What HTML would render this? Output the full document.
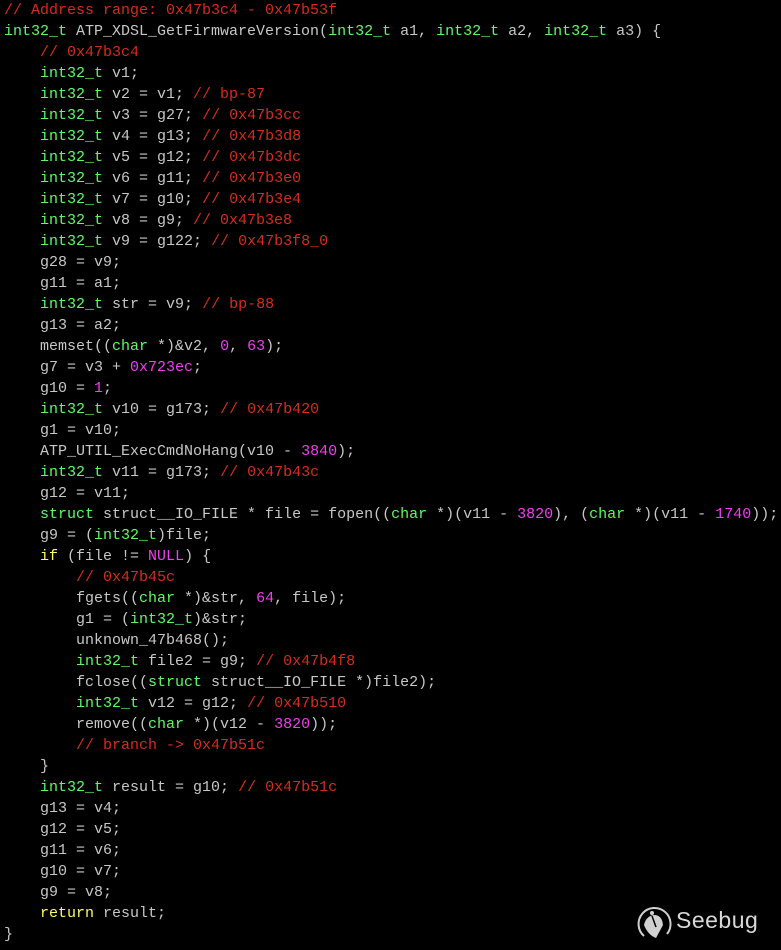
<!DOCTYPE html>
<html><head><meta charset="utf-8"><style>
html,body{margin:0;padding:0;background:#000;width:781px;height:950px;overflow:hidden}
pre{margin:0;padding:0 0 0 4px;font-family:"Liberation Mono",monospace;font-size:15px;line-height:21px;color:#c7c7c7;white-space:pre}
.c{color:#d52c1c}.t{color:#5ff967}.n{color:#f03ef0}.k{color:#fefb67}
.logo{position:absolute;left:634px;top:903px;width:140px;height:40px}
.logo span{position:absolute;left:42px;top:4px;font-family:"Liberation Sans",sans-serif;font-size:23px;color:#d8d8d8;letter-spacing:0.5px}
</style></head><body>
<pre><span class="c">// Address range: 0x47b3c4 - 0x47b53f</span>
<span class="t">int32_t</span> ATP_XDSL_GetFirmwareVersion(<span class="t">int32_t</span> a1, <span class="t">int32_t</span> a2, <span class="t">int32_t</span> a3) {
    <span class="c">// 0x47b3c4</span>
    <span class="t">int32_t</span> v1;
    <span class="t">int32_t</span> v2 = v1; <span class="c">// bp-87</span>
    <span class="t">int32_t</span> v3 = g27; <span class="c">// 0x47b3cc</span>
    <span class="t">int32_t</span> v4 = g13; <span class="c">// 0x47b3d8</span>
    <span class="t">int32_t</span> v5 = g12; <span class="c">// 0x47b3dc</span>
    <span class="t">int32_t</span> v6 = g11; <span class="c">// 0x47b3e0</span>
    <span class="t">int32_t</span> v7 = g10; <span class="c">// 0x47b3e4</span>
    <span class="t">int32_t</span> v8 = g9; <span class="c">// 0x47b3e8</span>
    <span class="t">int32_t</span> v9 = g122; <span class="c">// 0x47b3f8_0</span>
    g28 = v9;
    g11 = a1;
    <span class="t">int32_t</span> str = v9; <span class="c">// bp-88</span>
    g13 = a2;
    memset((<span class="t">char</span> *)&amp;v2, <span class="n">0</span>, <span class="n">63</span>);
    g7 = v3 + <span class="n">0x723ec</span>;
    g10 = <span class="n">1</span>;
    <span class="t">int32_t</span> v10 = g173; <span class="c">// 0x47b420</span>
    g1 = v10;
    ATP_UTIL_ExecCmdNoHang(v10 - <span class="n">3840</span>);
    <span class="t">int32_t</span> v11 = g173; <span class="c">// 0x47b43c</span>
    g12 = v11;
    <span class="t">struct</span> struct__IO_FILE * file = fopen((<span class="t">char</span> *)(v11 - <span class="n">3820</span>), (<span class="t">char</span> *)(v11 - <span class="n">1740</span>));
    g9 = (<span class="t">int32_t</span>)file;
    <span class="k">if</span> (file != <span class="n">NULL</span>) {
        <span class="c">// 0x47b45c</span>
        fgets((<span class="t">char</span> *)&amp;str, <span class="n">64</span>, file);
        g1 = (<span class="t">int32_t</span>)&amp;str;
        unknown_47b468();
        <span class="t">int32_t</span> file2 = g9; <span class="c">// 0x47b4f8</span>
        fclose((<span class="t">struct</span> struct__IO_FILE *)file2);
        <span class="t">int32_t</span> v12 = g12; <span class="c">// 0x47b510</span>
        remove((<span class="t">char</span> *)(v12 - <span class="n">3820</span>));
        <span class="c">// branch -&gt; 0x47b51c</span>
    }
    <span class="t">int32_t</span> result = g10; <span class="c">// 0x47b51c</span>
    g13 = v4;
    g12 = v5;
    g11 = v6;
    g10 = v7;
    g9 = v8;
    <span class="k">return</span> result;
}</pre>
<div class="logo">
<svg width="40" height="40" viewBox="0 0 40 40" style="position:absolute;left:0;top:0">
<path d="M10 33 A16 16 0 1 1 33 31" fill="none" stroke="#d0d0d0" stroke-width="2"/>
<path d="M10 22 Q12 13 20 12 Q28 12 29 22 L22 35 Q14 32 10 22 Z" fill="#d0d0d0"/>
<path d="M18 13 L22 24" stroke="#000" stroke-width="1.5"/>
<circle cx="18" cy="10" r="2" fill="#d0d0d0"/>
</svg>
<span>Seebug</span>
</div>
</body></html>
